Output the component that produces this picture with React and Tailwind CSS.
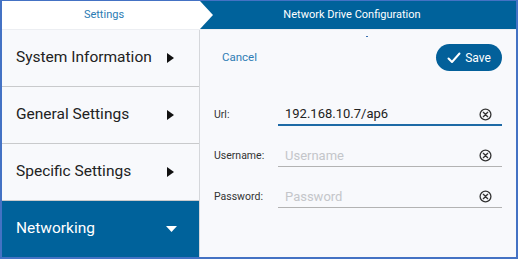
import React from 'react';

const font = { fontFamily: 'Roboto, "Noto Sans", sans-serif' };

function ClearIcon() {
  return (
    <svg width="13" height="13" viewBox="0 0 24 24" fill="none" stroke="#333" strokeWidth="2.4" strokeLinecap="round">
      <circle cx="12" cy="12" r="10" />
      <path d="M8 8l8 8M16 8l-8 8" />
    </svg>
  );
}

function RightTri({ color = '#111' }) {
  return (
    <svg width="7" height="10" viewBox="0 0 7 10">
      <polygon points="0,0 7,5 0,10" fill={color} />
    </svg>
  );
}

function DownTri() {
  return (
    <svg width="11" height="6" viewBox="0 0 11 6">
      <polygon points="0,0 11,0 5.5,6" fill="#fff" />
    </svg>
  );
}

const menu = ['System Information', 'General Settings', 'Specific Settings'];

function Field({ label, value, placeholder, active }) {
  return (
    <div className="flex items-center">
      <span className="w-[64px] pt-[6px] text-[10.5px] text-[#333]">{label}</span>
      <div
        className={
          'flex h-[28px] flex-1 items-center pl-[7px] pr-[10px] pt-[6px] ' +
          (active ? 'border-b-2 border-[#1e6aa6]' : 'border-b border-[#b3b3b3]')
        }
      >
        {value ? (
          <span className="flex-1 text-[13px] text-[#222]">{value}</span>
        ) : (
          <span className="flex-1 text-[13px] text-[#c4c6ca]">{placeholder}</span>
        )}
        <ClearIcon />
      </div>
    </div>
  );
}

export default function App() {
  return (
    <div
      className="h-[259px] w-[518px] border-b-2 border-l-2 border-r-2 border-t border-[#4472c4] bg-[#f8f9fc]"
      style={font}
    >
      <div className="relative flex h-[28px]">
        <div className="flex w-[198px] items-center justify-center bg-white pl-[6px] text-[11px] text-[#2b7bb3]">
          Settings
        </div>
        <div className="flex flex-1 items-center justify-center bg-[#00629b] pr-[12px] text-[11px] text-white">
          Network Drive Configuration
        </div>
        <svg className="absolute left-[198px] top-0" width="14" height="28" viewBox="0 0 14 28">
          <polygon points="0,0 13,14 0,28" fill="#fff" />
        </svg>
      </div>
      <div className="flex h-[228px] border-t border-[#eceef2]">
        <div className="flex w-[198px] flex-col border-r border-[#d5d7db]">
          {menu.map((m) => (
            <div key={m} className="flex h-[57px] items-center justify-between border-b border-[#c9cacc] pl-[14px] pr-[25px]">
              <span className="text-[15.5px] text-[#222]">{m}</span>
              <RightTri />
            </div>
          ))}
          <div className="flex h-[56px] items-center justify-between bg-[#00629b] pl-[14px] pr-[22px]">
            <span className="text-[15.5px] text-white">Networking</span>
            <DownTri />
          </div>
        </div>
        <div className="relative flex flex-1 flex-col px-[14px] pt-[14px]">
          <span className="absolute left-[166px] top-[6px] h-px w-[2px] bg-[#3a6fb0]" />
          <div className="flex h-[27px] items-center justify-between">
            <span className="ml-[8px] text-[11.5px] text-[#2f7db5]">Cancel</span>
            <div className="flex h-[27px] w-[66px] items-center justify-center gap-[4px] rounded-full bg-[#03609a] text-[12px] text-white">
              <svg width="14" height="12" viewBox="0 0 14 12" fill="none" stroke="#fff" strokeWidth="2" strokeLinecap="round" strokeLinejoin="round">
                <path d="M1.5 6.5l3.5 3.5 7.5-8.5" />
              </svg>
              <span>Save</span>
            </div>
          </div>
          <div className="mt-[27px] flex flex-col gap-[13px]">
            <Field label="Url:" value="192.168.10.7/ap6" active />
            <Field label="Username:" placeholder="Username" />
            <Field label="Password:" placeholder="Password" />
          </div>
        </div>
      </div>
    </div>
  );
}
